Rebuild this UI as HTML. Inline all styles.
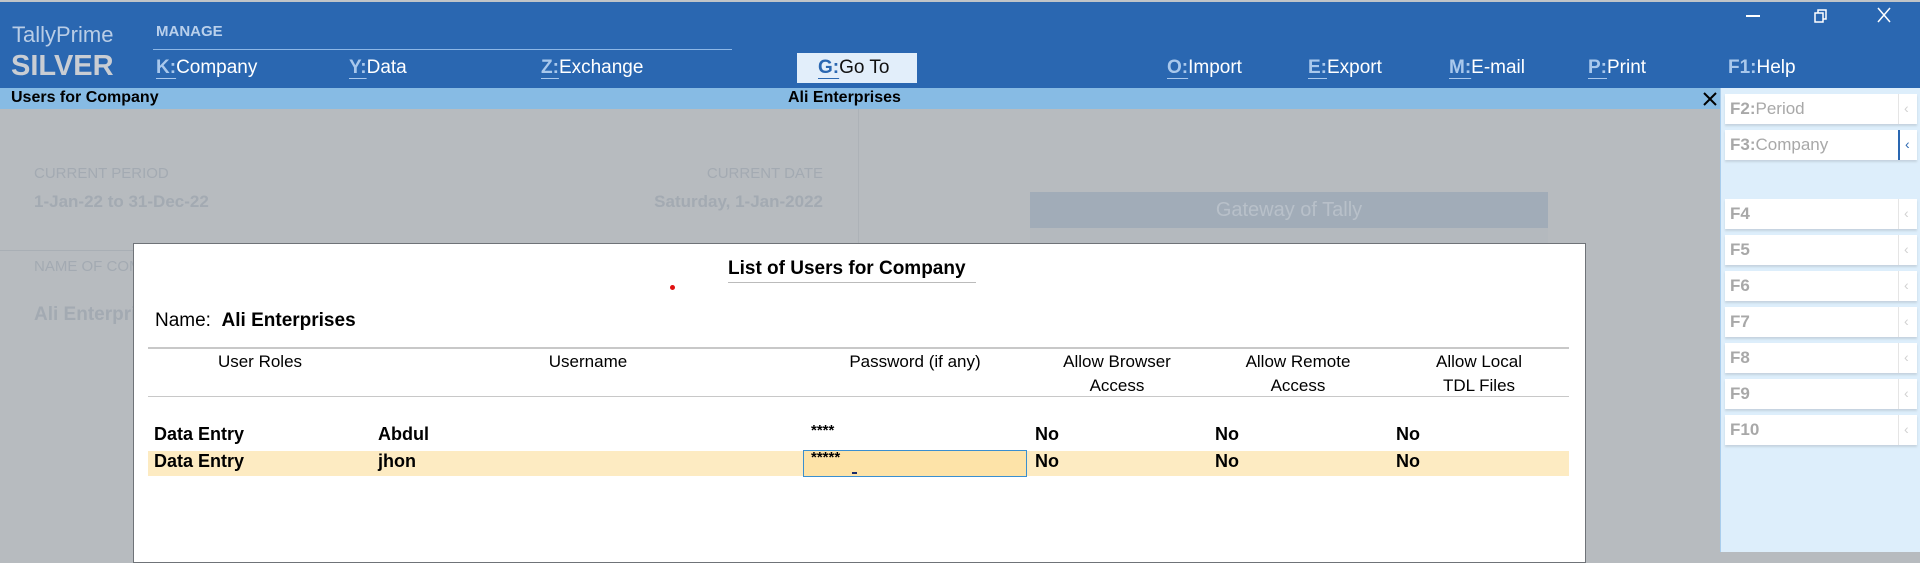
<!DOCTYPE html>
<html><head><meta charset="utf-8"><style>
*{margin:0;padding:0;box-sizing:border-box}
body{width:1920px;height:552px;overflow:hidden;position:relative;font-family:"Liberation Sans",Arial,sans-serif;background:#b7bbbf}
.a{position:absolute;white-space:nowrap}
#hdr{left:0;top:0;width:1920px;height:88px;background:#2a67b1;border-top:2px solid #c0c4c8}
.m{font-size:19px;color:#fff;top:57px}
.m b{font-weight:bold;color:#a9c8ec;text-decoration:underline;text-underline-offset:5px;text-decoration-thickness:1px}
#tb{left:0;top:88px;width:1720px;height:21px;background:#87bbe4}
.fb{left:1725px;width:192px;height:30px;background:#fff;box-shadow:0 2px 2px #c5d3df;font-size:17px;color:#a8a8a8;padding:5px 0 0 5px}
.fb i{font-style:normal;position:absolute;left:173px;top:0;height:30px;width:19px;border-left:1px solid #e5e5e5;color:#d0d0d0;font-size:14px;padding:6px 0 0 5px}
.h{font-size:17px;color:#000;text-align:center;width:220px;line-height:24px}
.r{font-size:18px;font-weight:bold;color:#000}
</style></head><body>
<div id="hdr" class="a"></div>
<div class="a" style="left:12px;top:22px;font-size:22px;color:#b9cde6">TallyPrime</div>
<div class="a" style="left:11px;top:50px;font-size:29px;font-weight:bold;color:#c9cdd3">SILVER</div>
<div class="a" style="left:156px;top:23px;font-size:15px;font-weight:bold;color:#b9d0ec">MANAGE</div>
<div class="a" style="left:153px;top:49px;width:579px;height:1px;background:#8db7e6"></div>
<div class="a m" style="left:156px"><b>K:</b>Company</div>
<div class="a m" style="left:349px"><b>Y:</b>Data</div>
<div class="a m" style="left:541px"><b>Z:</b>Exchange</div>
<div class="a" style="left:797px;top:53px;width:120px;height:30px;background:#e2eefa"></div>
<div class="a m" style="left:818px;color:#111"><b style="color:#2a67b1">G:</b>Go To</div>
<div class="a m" style="left:1167px"><b>O:</b>Import</div>
<div class="a m" style="left:1308px"><b>E:</b>Export</div>
<div class="a m" style="left:1449px"><b>M:</b>E-mail</div>
<div class="a m" style="left:1588px"><b>P:</b>Print</div>
<div class="a m" style="left:1728px"><b style="text-decoration:none">F1:</b>Help</div>
<div class="a" style="left:1746px;top:15px;width:14px;height:2px;background:#fff"></div>
<svg class="a" style="left:1813px;top:8px" width="16" height="16"><rect x="2" y="5" width="8" height="9" fill="none" stroke="#fff" stroke-width="1.5"/><path d="M5 5V2h8v9h-3" fill="none" stroke="#fff" stroke-width="1.5"/></svg>
<svg class="a" style="left:1876px;top:7px" width="16" height="16"><path d="M2 1L14 15M14 1L2 15" stroke="#fff" stroke-width="1.5"/></svg>
<div id="tb" class="a"></div>
<div class="a" style="left:11px;top:89px;font-size:16px;font-weight:bold">Users for Company</div>
<div class="a" style="left:788px;top:89px;font-size:16px;font-weight:bold">Ali Enterprises</div>
<svg class="a" style="left:1703px;top:92px" width="14" height="14"><path d="M1 1L13 13M13 1L1 13" stroke="#000" stroke-width="2"/></svg>
<div class="a" style="left:1720px;top:88px;width:200px;height:464px;background:#ddeefb;border-left:1px solid #a9cdec"></div>
<div class="a fb" style="top:94px"><b>F2:</b>Period<i>‹</i></div>
<div class="a fb" style="top:130px"><b>F3:</b>Company<i style="border-left:2px solid #2a67b1;color:#2a67b1">‹</i></div>
<div class="a fb" style="top:199px"><b>F4</b><i>‹</i></div>
<div class="a fb" style="top:235px"><b>F5</b><i>‹</i></div>
<div class="a fb" style="top:271px"><b>F6</b><i>‹</i></div>
<div class="a fb" style="top:307px"><b>F7</b><i>‹</i></div>
<div class="a fb" style="top:343px"><b>F8</b><i>‹</i></div>
<div class="a fb" style="top:379px"><b>F9</b><i>‹</i></div>
<div class="a fb" style="top:415px"><b>F10</b><i>‹</i></div>
<div class="a" style="left:858px;top:109px;width:1px;height:140px;background:#adb2b7"></div>
<div class="a" style="left:34px;top:165px;font-size:15px;color:#a3aab2">CURRENT PERIOD</div>
<div class="a" style="left:34px;top:192px;font-size:17px;font-weight:bold;color:#a3aab2">1-Jan-22 to 31-Dec-22</div>
<div class="a" style="left:600px;width:223px;text-align:right;top:165px;font-size:15px;color:#a3aab2">CURRENT DATE</div>
<div class="a" style="left:600px;width:223px;text-align:right;top:192px;font-size:17px;font-weight:bold;color:#a3aab2">Saturday, 1-Jan-2022</div>
<div class="a" style="left:0;top:250px;width:858px;height:1px;background:#a9afb5"></div>
<div class="a" style="left:34px;top:258px;font-size:15px;color:#a3aab2">NAME OF COMPANY</div>
<div class="a" style="left:34px;top:304px;font-size:19px;font-weight:bold;color:#a3aab2">Ali Enterprises</div>
<div class="a" style="left:1030px;top:192px;width:518px;height:36px;background:#a1acb8;color:#b8c0c9;font-size:20px;text-align:center;line-height:36px">Gateway of Tally</div>
<div class="a" style="left:1030px;top:228px;width:518px;height:330px;background:#b4b9be"></div>
<div class="a" style="left:133px;top:243px;width:1453px;height:320px;background:#fff;border:1px solid #6f7378"></div>
<div class="a" style="left:728px;top:258px;font-size:19px;font-weight:bold">List of Users for Company</div>
<div class="a" style="left:728px;top:282px;width:248px;height:1px;background:#bbb"></div>
<div class="a" style="left:670px;top:285px;width:5px;height:5px;border-radius:50%;background:#e01010"></div>
<div class="a" style="left:155px;top:310px;font-size:19px">Name:&nbsp; <b>Ali Enterprises</b></div>
<div class="a" style="left:148px;top:347px;width:1421px;height:2px;background:#c8c8c8"></div>
<div class="a h" style="left:150px;top:350px">User Roles</div>
<div class="a h" style="left:478px;top:350px">Username</div>
<div class="a h" style="left:805px;top:350px">Password (if any)</div>
<div class="a h" style="left:1007px;top:350px">Allow Browser<br>Access</div>
<div class="a h" style="left:1188px;top:350px">Allow Remote<br>Access</div>
<div class="a h" style="left:1369px;top:350px">Allow Local<br>TDL Files</div>
<div class="a" style="left:148px;top:396px;width:1421px;height:1px;background:#c8c8c8"></div>
<div class="a" style="left:148px;top:451px;width:1421px;height:25px;background:#fdebc2"></div>
<div class="a" style="left:803px;top:450px;width:224px;height:27px;background:#fde3a8;border:1px solid #3a8fd0"></div>
<div class="a r" style="left:154px;top:424px">Data Entry</div>
<div class="a r" style="left:378px;top:424px">Abdul</div>
<div class="a" style="left:811px;top:422px;font-size:15px;font-weight:bold">****</div>
<div class="a r" style="left:1035px;top:424px">No</div>
<div class="a r" style="left:1215px;top:424px">No</div>
<div class="a r" style="left:1396px;top:424px">No</div>
<div class="a r" style="left:154px;top:451px">Data Entry</div>
<div class="a r" style="left:378px;top:451px">jhon</div>
<div class="a" style="left:811px;top:449px;font-size:15px;font-weight:bold">*****</div>
<div class="a" style="left:852px;top:472px;width:5px;height:2px;background:#1a2a6a"></div>
<div class="a r" style="left:1035px;top:451px">No</div>
<div class="a r" style="left:1215px;top:451px">No</div>
<div class="a r" style="left:1396px;top:451px">No</div>
</body></html>
